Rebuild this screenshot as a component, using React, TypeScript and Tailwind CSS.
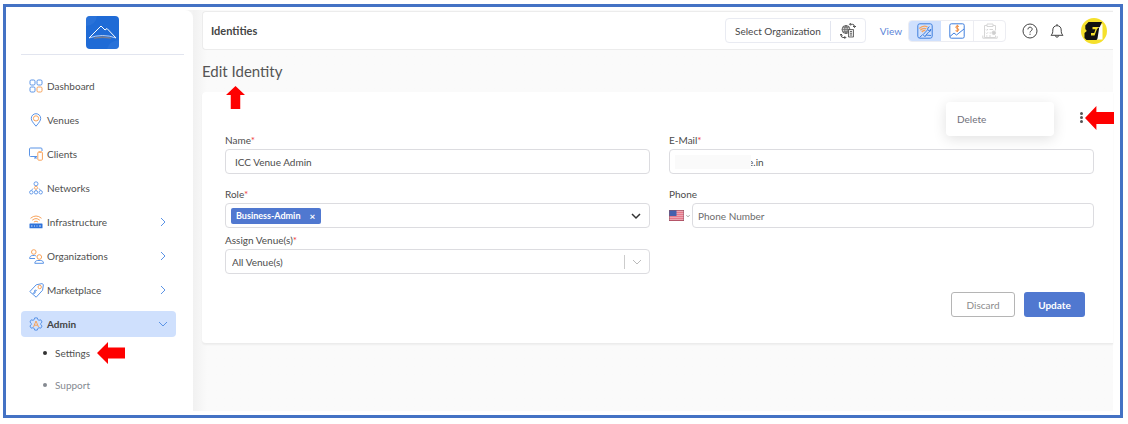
import React, { useState } from "react";

const BLUE = "#5b94e6";
const ORANGE = "#f7a35c";

type IconProps = { className?: string };

function Logo() {
  return (
    <svg viewBox="0 0 33 33" className="size-[33px]" role="img" aria-label="Home">
      <rect width="33" height="33" rx="4" fill="#1f6bd6" />
      <path d="M0 4a4 4 0 0 1 4-4h7q-1 9-11 10zM33 24v5a4 4 0 0 1-4 4h-8q2-8 12-9z" fill="#3379dc" opacity=".5" />
      <path d="M3 22 15 10l4 4 2-1.500L30 22" fill="none" stroke="#fff" strokeWidth="1" strokeLinejoin="round" />
      <path d="M3 22q13.500-5 27 0" fill="none" stroke="#dfe9fa" strokeWidth=".8" />
      <path d="M8 22.200q9-3 17 0-8-1.200-17 0z" fill="#8a7f80" stroke="#8a7f80" strokeWidth=".6" />
    </svg>
  );
}

function DashboardIcon() {
  return (
    <svg viewBox="0 0 14 14" className="size-3.5" fill="none" stroke={BLUE} strokeWidth="1">
      <rect x="1" y="1" width="5" height="5" rx="1.300" />
      <rect x="8" y="1" width="5" height="5" rx="1.300" />
      <rect x="1" y="8" width="5" height="5" rx="1.300" />
      <rect x="8" y="8" width="5" height="5" rx="1.300" stroke={ORANGE} />
    </svg>
  );
}

function VenuesIcon() {
  return (
    <svg viewBox="0 0 14 14" className="size-3.5" fill="none" stroke={BLUE} strokeWidth="1">
      <path d="M7 13.200C4 9.600 2.300 7.600 2.300 5.400a4.700 4.700 0 0 1 9.400 0c0 2.200-1.700 4.200-4.700 7.800z" />
      <circle cx="7" cy="5.400" r="2.600" stroke={ORANGE} />
    </svg>
  );
}

function ClientsIcon() {
  return (
    <svg viewBox="0 0 14 14" className="size-3.5" fill="none" stroke={BLUE} strokeWidth="1">
      <path d="M8 9.500H1.500a1 1 0 0 1-1-1V2a1 1 0 0 1 1-1h10.500a1 1 0 0 1 1 1v2M6.500 9.500v1.500M5 11h3" />
      <rect x="8.800" y="5" width="4.600" height="8.200" rx="1" stroke={ORANGE} fill="#fff" />
      <path d="M10.300 4v1.500h1.700V4" stroke={ORANGE} strokeWidth=".7" />
    </svg>
  );
}

function NetworksIcon() {
  return (
    <svg viewBox="0 0 14 14" className="size-3.5" fill="none" stroke={BLUE} strokeWidth=".9">
      <circle cx="7" cy="2.800" r="2" />
      <circle cx="2.300" cy="11.300" r="1.700" />
      <circle cx="7" cy="11.300" r="1.700" />
      <circle cx="11.700" cy="11.300" r="1.700" />
      <path d="M2.300 9.500 4 7.500M11.700 9.500 10 7.500M7 9.500V8.500" />
      <circle cx="7" cy="6.800" r="1.500" stroke={ORANGE} />
    </svg>
  );
}

function InfrastructureIcon() {
  return (
    <svg viewBox="0 0 14 14" className="size-3.5" fill="none" stroke={ORANGE} strokeWidth="1">
      <path d="M1.500 3.300Q7-1.300 12.500 3.300M3.200 5.200Q7 2 10.800 5.200M4.900 7Q7 5.300 9.100 7" />
      <rect x=".5" y="8.500" width="13" height="4.800" rx=".5" fill="#2f73da" stroke="none" />
      <path d="M2 11h1.500M5 11h1M7.500 11h1M10 11h2" stroke="#cfe0fa" />
    </svg>
  );
}

function OrganizationsIcon() {
  return (
    <svg viewBox="0 0 15 15" className="size-[15px]" fill="none" stroke={BLUE} strokeWidth="1">
      <circle cx="4.800" cy="3" r="2.300" stroke={ORANGE} />
      <circle cx="10.300" cy="8" r="2.300" stroke={ORANGE} />
      <path d="M6 9.500H.600C.600 7.600 2 6.500 3.800 6.500h1.700q1 0 1.700.6M5.800 14.300c0-1.900 1.400-2.800 3-2.800h2.900c1.600 0 2.800.9 2.800 2.800z" />
    </svg>
  );
}

function MarketplaceIcon() {
  return (
    <svg viewBox="0 0 15 15" className="size-[15px]" fill="none" stroke={BLUE} strokeWidth="1">
      <path d="m.800 8.600 6.400-6.800 5.800-1.200 1.400 1-.8 5.600-6.400 7z" strokeLinejoin="round" />
      <circle cx="10.700" cy="4" r="1.700" stroke={ORANGE} />
      <path d="M7.300 7.500c-1.300-1-2.600.2-1.500 1.300s-.2 2.400-1.500 1.200M7.800 6.800l-4 4" />
    </svg>
  );
}

function AdminIcon() {
  return (
    <svg viewBox="0 0 14 14" className="size-3.5" fill="none" stroke={BLUE} strokeWidth="1">
      <path d="M5.700.900h2.600l.5 1.700 1.200.7 1.800-.5 1.300 2.200-1.300 1.300v1.400l1.300 1.300-1.300 2.200-1.800-.5-1.200.7-.5 1.700H5.700l-.5-1.700-1.200-.7-1.800.5L.900 9l1.300-1.300V6.300L.900 5l1.300-2.200 1.800.5 1.200-.7z" strokeLinejoin="round" />
      <path d="M4.500 10 7 4l2.500 6M5.300 8.200h3.400" stroke={ORANGE} />
    </svg>
  );
}

function Chevron({ className = "" }: IconProps) {
  return (
    <svg viewBox="0 0 10 10" className={className} fill="none" stroke="currentColor">
      <path d="m1 3 4 4 4-4" />
    </svg>
  );
}

function SwitchOrgIcon() {
  return (
    <svg viewBox="0 0 16 16" className="size-4" fill="none" stroke="#4a4a4a" strokeWidth=".8">
      <circle cx="6" cy="6.500" r="4" fill="#d8d8d8" />
      <path d="M2 6.500h8M6 2.500v8M3 4.300h6M3 8.700h6M6 2.500q-3.500 4 0 8M6 2.500q3.500 4 0 8" strokeWidth=".5" />
      <path d="M8.500 6.500h5v7.500h-5z" fill="#e6e6e6" />
      <path d="M10 8.500h2M10 10.300h2M10 12h2" />
      <path d="M10 1.300h2.500q2 0 2 2.700M13 3l1.500 1.500L16 3M10.700 0 9.500 1.300l1.200 1.200M5.500 14.500H3q-2 0-2-2.700M0 12.500 1 11l1.500 1.500M4.500 13.200l1.300 1.300-1.300 1.300" stroke="#222" />
    </svg>
  );
}

function NetworkViewIcon() {
  return (
    <svg viewBox="0 0 16 16" className="size-4" fill="none" stroke="#3f7fdd" strokeWidth="1">
      <rect x=".8" y=".8" width="14.400" height="14.400" rx="2" />
      <path d="M2.300 5.500Q6 1.800 10.500 3.800M3.300 7.300Q6 4.500 9.300 5.800M4.800 9Q6.500 7 8.300 7.700" stroke={ORANGE} strokeWidth="1.300" />
      <path d="M12.500 3.700Q10.300 4.300 10.700 6.700L6 11.700M13.800 6Q14 8.700 11.700 9L9 12l5 .5M10.800 6.700l1.200 1.200 1.800-1.900M6 11.700l2 2 1-1.700M2.500 14.500l3-2.700" />
    </svg>
  );
}

function RevenueViewIcon() {
  return (
    <svg viewBox="0 0 16 16" className="size-4" fill="none" stroke="#3f7fdd" strokeWidth="1">
      <path d="M13.700.8H2.300A1.500 1.500 0 0 0 .800 2.300v11.400a1.500 1.500 0 0 0 1.500 1.500h11.400a1.500 1.500 0 0 0 1.500-1.500V2.300A1.500 1.500 0 0 0 13.700.8z" />
      <path d="m1 13.500 4-3.500 2.500 2L15 6" />
      <path d="M10 3.500q-2-1.300-3 0t1.300 1.900 1.200 2-3 .3M8.300 1.700v7.300" stroke="#f08a3c" />
    </svg>
  );
}

function ReportViewIcon() {
  return (
    <svg viewBox="0 0 16 16" className="size-4" fill="none" stroke="#d6d6d6" strokeWidth="1">
      <path d="M13.500 7.500v-5H11M5 2.500H2.500v12h11v-2M.800 12.500v2.700h14.400v-2M5 1h6v2.500H5z" />
      <path d="m4 6.500.8.8L6 6M7.500 6.500H11M4 9.800l.8.8L6 9.300M7.500 10H9M4 13h1.500M7 13h2" />
      <circle cx="11.800" cy="9.800" r="1.800" fill="#cfcfcf" />
    </svg>
  );
}

function HelpIcon() {
  return (
    <svg viewBox="0 0 16 16" className="size-4" fill="none" stroke="#444" strokeWidth="1">
      <circle cx="8" cy="8" r="7" />
      <path d="M5.900 6.400c0-3 4.300-2.800 4.300-.2C10.200 7.800 8 7.900 8 9.500M8 10.700v1.200" />
    </svg>
  );
}

function BellIcon() {
  return (
    <svg viewBox="0 0 16 16" className="size-4" fill="none" stroke="#444" strokeWidth="1" strokeLinejoin="round">
      <path d="M2 12.300c1.600-1.600 1.800-2.600 1.800-5.300C3.800 4.300 5.500 2.700 8 2.700S12.200 4.300 12.200 7c0 2.700.2 3.700 1.800 5.300zM6.300 12.500q.3 1.700 1.700 1.700t1.700-1.700M8 1v1.700" />
    </svg>
  );
}

function Avatar() {
  return (
    <svg viewBox="0 0 26 26" className="size-[26px]">
      <circle cx="13" cy="13" r="13" fill="#f5e02c" />
      <path d="m18 7.500 3.500-1.500v15.500H15z" fill="#fff" />
      <path d="M7.500 4H21l-2.200 5h-7.300v2.200h3L13.200 15H10v2.500h3.500L16 11l2.300-2-1.800 11.500-1 1.500H5.500L3.500 20v-5l2.300-2-1.500-2V7.500z" fill="#111" />
    </svg>
  );
}

function Flag() {
  return (
    <svg viewBox="0 0 15 11" className="h-[11px] w-[15px]">
      <rect width="15" height="11" fill="#f3c9d0" />
      <path d="M0 .8h15M0 2.800h15M0 4.800h15M0 6.800h15M0 8.800h15M0 10.500h15" stroke="#e0566b" strokeWidth="1" />
      <rect width="7.500" height="6" fill="#4560ad" />
      <rect x=".25" y=".25" width="14.500" height="10.500" fill="none" stroke="#8a5566" strokeWidth=".5" />
    </svg>
  );
}

function Arrow({ className = "" }: IconProps) {
  return (
    <svg viewBox="0 0 28 22" preserveAspectRatio="none" className={className} aria-hidden="true">
      <path d="M0 11 11 0v5.500h17v11H11V22z" fill="#fe0000" />
    </svg>
  );
}

const items = [
  { label: "Dashboard", icon: <DashboardIcon />, open: false, nested: false },
  { label: "Venues", icon: <VenuesIcon />, open: false, nested: false },
  { label: "Clients", icon: <ClientsIcon />, open: false, nested: false },
  { label: "Networks", icon: <NetworksIcon />, open: false, nested: false },
  { label: "Infrastructure", icon: <InfrastructureIcon />, open: false, nested: true },
  { label: "Organizations", icon: <OrganizationsIcon />, open: false, nested: true },
  { label: "Marketplace", icon: <MarketplaceIcon />, open: false, nested: true },
  { label: "Admin", icon: <AdminIcon />, open: true, nested: true },
];

function Sidebar() {
  return (
    <aside className="w-[187px] shrink-0 rounded-tr-lg bg-white pt-1.5 pr-[9px] pl-[15px]">
      <div className="flex justify-center border-b border-[#e2e5ef] pb-[5px]">
        <a href="#home">
          <Logo />
        </a>
      </div>
      <nav className="mt-[18px] mr-2">
        <ul className="flex flex-col gap-2">
          {items.map((item) => (
            <li key={item.label}>
              <a
                href={"#" + item.label.toLowerCase()}
                className={
                  "flex h-[26px] items-center rounded px-2 " +
                  (item.open ? "bg-[#cfe0fd] font-bold text-[#444]" : "text-[#505050]")
                }
              >
                <span className="flex w-[18px] shrink-0">{item.icon}</span>
                <span className="grow">{item.label}</span>
                {item.nested && (
                  <Chevron className={"size-2.5 text-[#5b94e6] " + (item.open ? "" : "-rotate-90")} />
                )}
              </a>
            </li>
          ))}
        </ul>
        <ul className="pl-[22px]">
          <li className="relative flex h-8 items-center text-[#505050]">
            <span className="mr-2 size-1 rounded-full bg-[#333]" />
            <a href="#settings">Settings</a>
            <Arrow className="absolute left-[54px] h-[22px] w-7" />
          </li>
          <li className="flex h-8 items-center text-[#858a91]">
            <span className="mr-2 size-1 rounded-full bg-[#858a91]" />
            <a href="#support">Support</a>
          </li>
        </ul>
      </nav>
    </aside>
  );
}

function Header() {
  return (
    <header className="flex h-[39px] items-center rounded-l border border-r-0 border-[#ececec] bg-white pr-1.5 pl-2">
      <h1 className="grow text-[11px] font-bold text-[#444]">Identities</h1>
      <div className="flex h-[25px] items-center rounded border border-[#e9ebf2]">
        <button className="px-[9px] text-[#484848]">Select Organization</button>
        <button className="flex h-5 items-center border-l border-[#e2e5ef] px-[9px]" aria-label="Switch organization">
          <SwitchOrgIcon />
        </button>
      </div>
      <span className="mr-1.5 ml-3.5 text-[#5b84d8]">View</span>
      <div className="flex h-[22px] overflow-hidden rounded border border-[#ecedf2]">
        <button className="flex w-8 items-center justify-center bg-[#cfe0fd]" aria-label="Network view">
          <NetworkViewIcon />
        </button>
        <button className="flex w-8 items-center justify-center" aria-label="Revenue view">
          <RevenueViewIcon />
        </button>
        <button className="flex w-8 items-center justify-center border-l border-[#ecedf2]" aria-label="Report view">
          <ReportViewIcon />
        </button>
      </div>
      <button className="ml-4" aria-label="Help">
        <HelpIcon />
      </button>
      <button className="ml-[11px]" aria-label="Notifications">
        <BellIcon />
      </button>
      <button className="ml-4" aria-label="Account">
        <Avatar />
      </button>
    </header>
  );
}

const control = "flex h-[25px] items-center rounded border border-[#dcdce0] bg-white";

function Field({
  label,
  id,
  required = false,
  children,
}: {
  label: string;
  id: string;
  required?: boolean;
  children: React.ReactNode;
}) {
  return (
    <div className="flex flex-col gap-0.5">
      <label htmlFor={id} className="h-3.5 leading-3.5">
        {label}
        {required && <span className="text-[#f03e3e]">*</span>}
      </label>
      {children}
    </div>
  );
}

function IdentityForm() {
  const [name, setName] = useState("ICC Venue Admin");
  const [email, setEmail] = useState("e.in");
  const [phone, setPhone] = useState("");

  return (
    <form className="rounded-l border-b border-[#ececec] bg-white pr-[19px] pb-[26px] pl-[23px] text-[#4c4c4c] shadow-xs">
      <div className="relative flex h-[41px] justify-end pt-[17px]">
        <div className="absolute top-2.5 right-10 w-[108px] rounded bg-white shadow-[0_3px_14px_rgba(0,0,0,0.12)]">
          <button type="button" className="h-[34px] w-full px-[11px] text-left text-[#70707a]">
            Delete
          </button>
        </div>
        <button type="button" className="mr-[11px] flex h-4 w-1 flex-col items-center justify-center gap-px" aria-label="More actions">
          <span className="size-[3px] rounded-full bg-[#555]" />
          <span className="size-[3px] rounded-full bg-[#555]" />
          <span className="size-[3px] rounded-full bg-[#555]" />
        </button>
        <Arrow className="absolute top-3.5 -right-5 h-6 w-[29px]" />
      </div>

      <div className="grid grid-cols-2 gap-x-[19px] gap-y-[13px]">
        <Field label="Name" id="name" required>
          <input id="name" value={name} onChange={(e) => setName(e.target.value)} className={control + " w-full px-[9px]"} />
        </Field>
        <Field label="E-Mail" id="email" required>
          <div className={control + " relative"}>
            <input id="email" value={email} onChange={(e) => setEmail(e.target.value)} className="w-full pl-[78px]" />
            <span className="absolute left-[5px] h-3.5 w-[76px] bg-[#fafafa]" />
          </div>
        </Field>

        <div className="flex flex-col gap-[5px]">
          <Field label="Role" id="role" required>
            <div className={control + " justify-between pr-2 pl-[5px]"}>
              <span className="flex h-4 items-center gap-2 rounded-xs bg-[#5078d0] px-[5px] text-[9px] font-bold text-white">
                Business-Admin
                <button type="button" aria-label="Remove Business-Admin" className="w-2 text-[10px]">
                  ×
                </button>
              </span>
              <button id="role" type="button" aria-label="Show roles">
                <Chevron className="size-2.5 stroke-[1.5] text-[#333]" />
              </button>
            </div>
          </Field>
          <Field label="Assign Venue(s)" id="venues" required>
            <div className={control + " relative"}>
              <select id="venues" className="w-full appearance-none bg-transparent px-1.5">
                <option>All Venue(s)</option>
              </select>
              <span className="pointer-events-none absolute right-[7px] flex h-3.5 items-center border-l border-[#ccc] pl-[7px]">
                <Chevron className="size-2.5 text-[#bbb]" />
              </span>
            </div>
          </Field>
        </div>

        <Field label="Phone" id="phone">
          <div className="flex">
            <button type="button" aria-label="Country: United States" className="flex w-[23px] shrink-0 items-center gap-0.5">
              <Flag />
              <Chevron className="size-1 stroke-2 text-[#888]" />
            </button>
            <input
              id="phone"
              type="tel"
              value={phone}
              placeholder="Phone Number"
              onChange={(e) => setPhone(e.target.value)}
              className={control + " min-w-0 grow px-[5px] placeholder:text-[#6c6c6c]"}
            />
          </div>
        </Field>
      </div>

      <div className="mt-[18px] mr-[9px] flex justify-end gap-[9px]">
        <button type="button" className="h-[25px] w-16 rounded-[3px] border border-[#b5b5b5] text-[#8c8c8c]">
          Discard
        </button>
        <button type="submit" className="h-[25px] w-[61px] rounded-[3px] bg-[#5078d0] font-bold text-white">
          Update
        </button>
      </div>
    </form>
  );
}

export default function App() {
  return (
    <div className="bg-white pt-1 pr-[5px] pb-1.5 pl-[3px] font-['Lato',sans-serif] text-[10px] leading-4">
      <div className="flex min-h-[414px] border-[3px] border-[#4472c4] bg-white pt-[3px] pr-[7px] pb-1">
        <div className="flex grow bg-[#f3f3f3]">
          <Sidebar />
          <main className="min-w-0 grow bg-linear-to-r from-[#f1f1f1] to-[#fafafa] to-[14px] pt-px pl-[9px]">
            <Header />
            <div className="relative flex h-[42px] items-center">
              <h2 className="text-[15px] text-[#555]">Edit Identity</h2>
              <Arrow className="absolute top-[38px] left-[22px] h-[19px] w-[23px] rotate-90" />
            </div>
            <IdentityForm />
          </main>
        </div>
      </div>
    </div>
  );
}
